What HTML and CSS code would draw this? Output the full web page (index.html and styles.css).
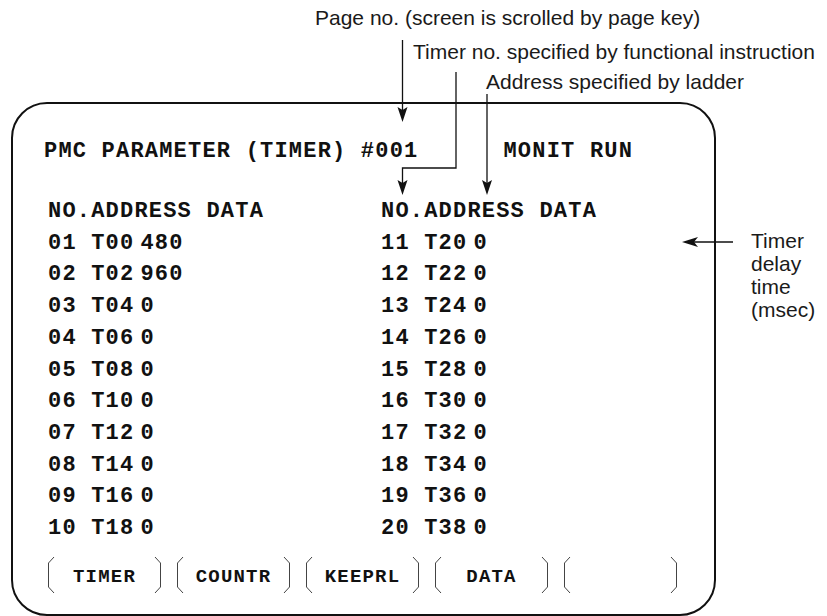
FILE: index.html
```html
<!DOCTYPE html>
<html lang="en">
<head>
    <meta charset="UTF-8">
    <meta name="viewport" content="width=device-width, initial-scale=1.0">
    <title>PMC Parameter (Timer)</title>
    <link rel="stylesheet" href="styles.css">
</head>
<body>

    <div class="figure">
        <!-- callouts around the screen -->
        <p class="note note-page">Page no. (screen is scrolled by page key)</p>
        <p class="note note-timer">Timer no. specified by functional instruction</p>
        <p class="note note-addr">Address specified by ladder</p>
        <p class="note note-delay">Timer<br>delay<br>time<br>(msec)</p>

        <svg class="leaders" width="827" height="616" viewBox="0 0 827 616">
            <g fill="none" stroke="#111" stroke-width="1.3">
                <path d="M402.5 40 V112"/>
                <path d="M456 72 V168 H402.5 V185"/>
                <path d="M487 94 V185"/>
                <path d="M733 242 H692"/>
            </g>
            <g fill="#111">
                <path d="M402.5 122 L397.5 107 L402.5 110 L407.5 107 Z"/>
                <path d="M402.5 195 L397.5 180 L402.5 183 L407.5 180 Z"/>
                <path d="M487 195 L482 180 L487 183 L492 180 Z"/>
                <path d="M682 242 L698 237 L694 242 L698 247 Z"/>
            </g>
        </svg>

        <div class="screen">
            <div class="screen-title">
                <span>PMC PARAMETER (TIMER) #001</span>
                <span>MONIT RUN</span>
            </div>

            <div class="params">
                <div class="param-col">
                    <div class="row">NO.ADDRESS DATA</div>
                    <div class="row">01 T00<span class="val">480</span></div>
                    <div class="row">02 T02<span class="val">960</span></div>
                    <div class="row">03 T04<span class="val">0</span></div>
                    <div class="row">04 T06<span class="val">0</span></div>
                    <div class="row">05 T08<span class="val">0</span></div>
                    <div class="row">06 T10<span class="val">0</span></div>
                    <div class="row">07 T12<span class="val">0</span></div>
                    <div class="row">08 T14<span class="val">0</span></div>
                    <div class="row">09 T16<span class="val">0</span></div>
                    <div class="row">10 T18<span class="val">0</span></div>
                </div>
                <div class="param-col">
                    <div class="row">NO.ADDRESS DATA</div>
                    <div class="row">11 T20<span class="val">0</span></div>
                    <div class="row">12 T22<span class="val">0</span></div>
                    <div class="row">13 T24<span class="val">0</span></div>
                    <div class="row">14 T26<span class="val">0</span></div>
                    <div class="row">15 T28<span class="val">0</span></div>
                    <div class="row">16 T30<span class="val">0</span></div>
                    <div class="row">17 T32<span class="val">0</span></div>
                    <div class="row">18 T34<span class="val">0</span></div>
                    <div class="row">19 T36<span class="val">0</span></div>
                    <div class="row">20 T38<span class="val">0</span></div>
                </div>
            </div>

            <div class="softkeys">
                <div class="key">
                    <svg class="bracket" width="8" height="36" viewBox="0 0 8 36"><path d="M7 0 L1.5 6 V30 L7 36"/></svg>
                    <span class="key-label">TIMER</span>
                    <svg class="bracket" width="8" height="36" viewBox="0 0 8 36"><path d="M1 0 L6.5 6 V30 L1 36"/></svg>
                </div>
                <div class="key">
                    <svg class="bracket" width="8" height="36" viewBox="0 0 8 36"><path d="M7 0 L1.5 6 V30 L7 36"/></svg>
                    <span class="key-label">COUNTR</span>
                    <svg class="bracket" width="8" height="36" viewBox="0 0 8 36"><path d="M1 0 L6.5 6 V30 L1 36"/></svg>
                </div>
                <div class="key">
                    <svg class="bracket" width="8" height="36" viewBox="0 0 8 36"><path d="M7 0 L1.5 6 V30 L7 36"/></svg>
                    <span class="key-label">KEEPRL</span>
                    <svg class="bracket" width="8" height="36" viewBox="0 0 8 36"><path d="M1 0 L6.5 6 V30 L1 36"/></svg>
                </div>
                <div class="key">
                    <svg class="bracket" width="8" height="36" viewBox="0 0 8 36"><path d="M7 0 L1.5 6 V30 L7 36"/></svg>
                    <span class="key-label">DATA</span>
                    <svg class="bracket" width="8" height="36" viewBox="0 0 8 36"><path d="M1 0 L6.5 6 V30 L1 36"/></svg>
                </div>
                <div class="key">
                    <svg class="bracket" width="8" height="36" viewBox="0 0 8 36"><path d="M7 0 L1.5 6 V30 L7 36"/></svg>
                    <span class="key-label"></span>
                    <svg class="bracket" width="8" height="36" viewBox="0 0 8 36"><path d="M1 0 L6.5 6 V30 L1 36"/></svg>
                </div>
            </div>
        </div>
    </div>

</body>
</html>
```

FILE: styles.css
```css
body {
    margin: 0;
    background: #fff;
    color: #111;
    overflow: hidden;
}

.figure {
    position: relative;
    width: 827px;
    height: 616px;
    padding-top: 102px;
    box-sizing: border-box;
}

/* callout texts */
.note {
    position: absolute;
    margin: 0;
    font-family: "Liberation Sans", Arial, sans-serif;
    font-size: 21px;
    line-height: 23px;
    color: #1a1a1a;
    white-space: nowrap;
}

.note-page { left: 315px; top: 6px; }
.note-timer { left: 413px; top: 40px; }
.note-addr { left: 486px; top: 70px; }
.note-delay { left: 751px; top: 229px; }

.leaders {
    position: absolute;
    left: 0;
    top: 0;
    pointer-events: none;
}

/* the CRT screen */
.screen {
    margin-left: 11px;
    width: 705px;
    height: 514px;
    box-sizing: border-box;
    border: 2px solid #111;
    border-radius: 36px;
    padding: 32px 0 0 31px;
    font-family: "Liberation Mono", "Courier New", monospace;
    font-weight: 700;
    color: #111;
}

.screen-title {
    display: flex;
    gap: 85px;
    font-size: 22px;
    letter-spacing: 1.2px;
    line-height: 32px;
    white-space: pre;
}

.params {
    display: flex;
    margin: 28px 0 0 4px;
}

.param-col {
    width: 340px;
}

.row {
    font-size: 22px;
    letter-spacing: 1.2px;
    line-height: 31.7px;
    white-space: pre;
}

.val {
    margin-left: 6px;
}

.softkeys {
    display: flex;
    gap: 14px;
    margin: 12px 0 0 3px;
}

.key {
    display: flex;
    width: 115px;
    height: 36px;
}

.bracket {
    flex: none;
    fill: none;
    stroke: #444;
    stroke-width: 1;
}

.key-label {
    flex: 1;
    text-align: center;
    font-size: 19px;
    letter-spacing: 1.2px;
    padding-top: 4px;
    line-height: 32px;
}
```
